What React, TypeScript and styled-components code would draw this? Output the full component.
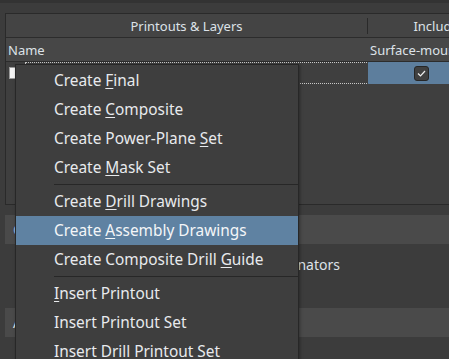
import React from "react";
import styled, { createGlobalStyle } from "styled-components";

const Global = createGlobalStyle`
  html, body { margin: 0; padding: 0; background: #3c3c3c; }
  body { font-family: "Noto Sans", "Open Sans", sans-serif; color: #dde2e8; }
  * { box-sizing: border-box; }
`;

const Page = styled.div`
  position: relative;
  width: 449px;
  height: 359px;
  overflow: hidden;
  background: #3c3c3c;
`;

const TopStrip = styled.div`
  height: 3px;
  background: #333333;
`;

const Table = styled.div`
  margin: 10px 0 0 5px;
  width: 600px;
  height: 192px;
  border: 1px solid #2a2a2a;
  border-right: none;
  background: #3f3f3f;
  display: flex;
  flex-direction: column;
`;

const HeaderRow = styled.div`
  display: grid;
  grid-template-columns: 361px 1px 218px;
  height: 24px;
  background: #444444;
  border-bottom: 1px solid #2c2c2c;
  font-size: 13px;
`;

const HeadCell = styled.div`
  display: flex;
  align-items: center;
  justify-content: center;
  white-space: nowrap;
`;

const HeadSep = styled.div`
  align-self: center;
  height: 16px;
  background: #2a2a2a;
`;

const SubHeaderRow = styled.div`
  display: grid;
  grid-template-columns: 362px 109px 109px;
  height: 24px;
  background: #474747;
  border-bottom: 1px solid #2c2c2c;
  font-size: 13px;
`;

const SubCell = styled.div`
  display: flex;
  align-items: center;
  padding-left: 2px;
  white-space: nowrap;
  overflow: hidden;
`;

const DataRow = styled.div`
  display: grid;
  grid-template-columns: 362px 109px 109px;
  height: 22px;
`;

const NameCell = styled.div`
  display: flex;
  align-items: stretch;
  padding-left: 3px;
`;

const WhiteBox = styled.div`
  align-self: center;
  width: 12px;
  height: 12px;
  margin-right: 4px;
  background: #f4f4f4;
  border: 1px solid #9a9a9a;
`;

const FocusRect = styled.div`
  flex: 1;
  border: 1px dotted #c8c8c8;
  margin-right: -1px;
`;

const CheckCell = styled.div<{ $selected?: boolean }>`
  display: flex;
  align-items: center;
  justify-content: center;
  background: ${(p) => (p.$selected ? "#5d7e9d" : "transparent")};
`;

const DarkCheck = styled.div`
  width: 15px;
  height: 15px;
  border: 1px solid #262626;
  border-radius: 3px;
  background: #404040;
  display: flex;
  align-items: center;
  justify-content: center;
  margin-right: 2px;
`;

const Band = styled.div`
  margin: 10px 0 0 5px;
  height: 29px;
  background: #4a4a4a;
  display: flex;
  align-items: center;
  padding-left: 8px;
  font-size: 14px;
  color: #8fb3d9;
`;

const OptionRow = styled.div`
  width: 340px;
  height: 64px;
  display: flex;
  justify-content: flex-end;
  padding-top: 11px;
  font-size: 14px;
  line-height: 20px;
  color: #dde2e8;
`;

const Band2 = styled(Band)`
  margin-top: 0;
  color: #e6e6e6;
`;

const Menu = styled.div`
  position: absolute;
  left: 15px;
  top: 64px;
  width: 284px;
  padding-top: 1px;
  background: #3e3e3e;
  border: 1px solid #272727;
  box-shadow: 1px 1px 3px rgba(0, 0, 0, 0.35);
  font-size: 15.4px;
`;

const Item = styled.div<{ $active?: boolean }>`
  height: 29px;
  line-height: 29px;
  padding-left: 38px;
  white-space: nowrap;
  color: ${(p) => (p.$active ? "#f4f6f8" : "#e8eaed")};
  background: ${(p) => (p.$active ? "#5f82a2" : "transparent")};
  u { text-underline-offset: 2px; }
`;

const Separator = styled.div`
  height: 5px;
  display: flex;
  align-items: center;
  padding-left: 38px;
  &::after {
    content: "";
    flex: 1;
    height: 1px;
    background: #272727;
  }
`;

const CheckIcon = () => (
  <svg width="9" height="7" viewBox="0 0 9 7">
    <path d="M1 3.5 L3.5 6 L8 1" fill="none" stroke="#eeeeee" strokeWidth="1.2" />
  </svg>
);

export default function App() {
  return (
    <Page>
      <Global />
      <TopStrip />
      <Table>
        <HeaderRow>
          <HeadCell>Printouts &amp; Layers</HeadCell>
          <HeadSep />
          <HeadCell>Include Components</HeadCell>
        </HeaderRow>
        <SubHeaderRow>
          <SubCell>Name</SubCell>
          <SubCell>Surface-mount</SubCell>
          <SubCell>Through-hole</SubCell>
        </SubHeaderRow>
        <DataRow>
          <NameCell>
            <WhiteBox />
            <FocusRect />
          </NameCell>
          <CheckCell $selected>
            <DarkCheck>
              <CheckIcon />
            </DarkCheck>
          </CheckCell>
          <CheckCell>
            <DarkCheck>
              <CheckIcon />
            </DarkCheck>
          </CheckCell>
        </DataRow>
      </Table>
      <Band>Options</Band>
      <OptionRow>Show Component Designators</OptionRow>
      <Band2>Advanced</Band2>
      <Menu>
        <Item>Create <u>F</u>inal</Item>
        <Item>Create <u>C</u>omposite</Item>
        <Item>Create Power-Plane <u>S</u>et</Item>
        <Item>Create <u>M</u>ask Set</Item>
        <Separator />
        <Item>Create <u>D</u>rill Drawings</Item>
        <Item $active>Create <u>A</u>ssembly Drawings</Item>
        <Item>Create Composite Drill <u>G</u>uide</Item>
        <Separator />
        <Item><u>I</u>nsert Printout</Item>
        <Item>Insert Printout Set</Item>
        <Item>Insert Drill Printout Set</Item>
      </Menu>
    </Page>
  );
}
